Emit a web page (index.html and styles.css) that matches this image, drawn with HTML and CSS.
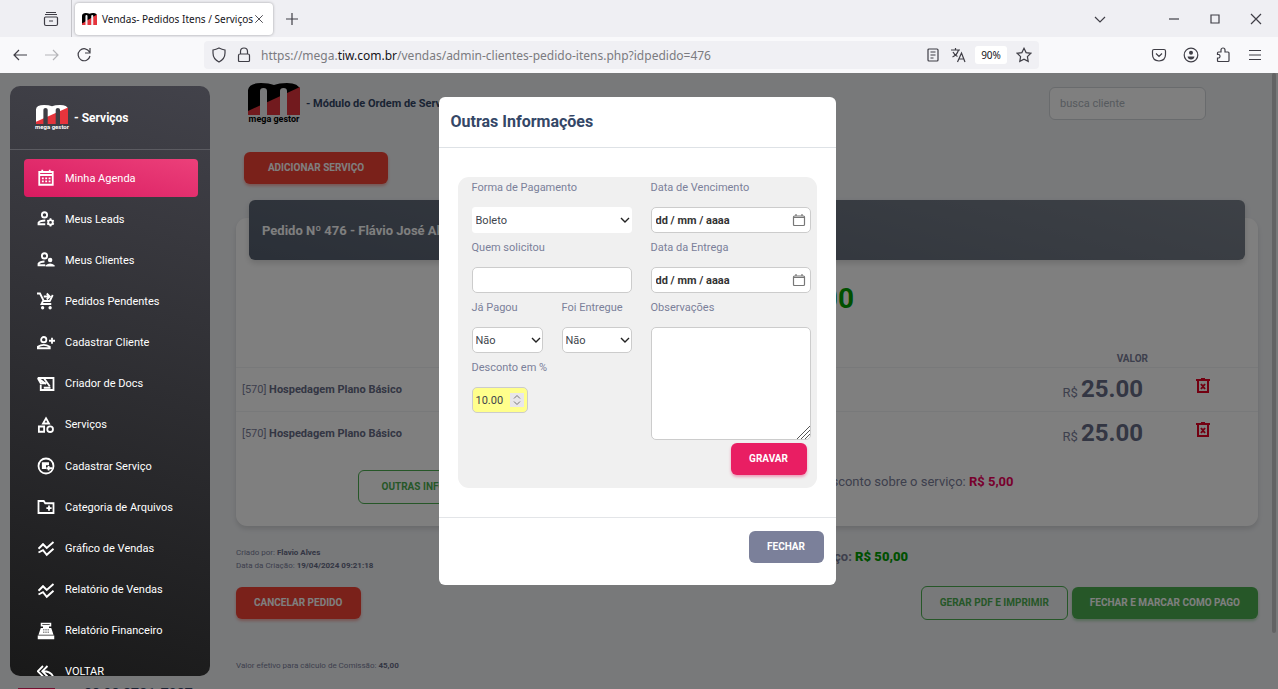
FILE: index.html
```html
<!DOCTYPE html>
<html lang="pt-BR">
<head>
<meta charset="utf-8">
<title>Vendas- Pedidos Itens / Serviços</title>
<link rel="stylesheet" href="styles.css">
</head>
<body>
<svg class="defs" aria-hidden="true">
  <symbol id="mark" viewBox="0 0 52 32">
    <path class="mark-base" d="M0 32V7Q1 0 13 0Q21 0 26 2Q31 0 39 0Q51 0 52 7V32Z"/>
    <path class="mark-red" d="M0 32V28L52 4V32Z"/>
    <path class="mark-gap" d="M12 32V8Q12 5 15.500 5Q19 5 19 8V32ZM32 32V8Q32 5 35.500 5Q39 5 39 8V32Z"/>
  </symbol>
  <symbol id="chev" viewBox="0 0 10 6"><path d="M1 1l4 4 4-4" fill="none" stroke="currentColor" stroke-width="1.4"/></symbol>
  <symbol id="cal" viewBox="0 0 14 14"><path d="M2.500 3h9q1 0 1 1v7.500q0 1-1 1h-9q-1 0-1-1V4q0-1 1-1zM1.500 4.500h11M4 1v2M10 1v2" fill="none" stroke="currentColor" stroke-width="1.200"/></symbol>
  <symbol id="trash" viewBox="0 0 14 16"><path d="M0 2h14M5 1h4M2 2v12h10V2M5 6l4 5M9 6l-4 5" fill="none" stroke="currentColor" stroke-width="2"/></symbol>
  <symbol id="chart" viewBox="0 0 24 24"><path d="M2 12l6-6 5 5 9-8M2 17l6-3 5 6 9-8" transform="translate(0 1)" fill="none" stroke="currentColor" stroke-width="2.600"/></symbol>
</svg>

<header class="browser">
  <div class="tabs">
    <button class="chrome-btn recent" aria-label="Abas recentes"><svg viewBox="0 0 16 16"><path d="M2 3.500h12M3 1.500h10M2.500 6h11q1 0 1 1v6q0 1.500-1.500 1.500H3q-1.500 0-1.500-1.500V7q0-1 1-1zM6 10h4"/></svg></button>
    <div class="tab">
      <svg class="favicon mark-light" viewBox="0 0 52 32" preserveAspectRatio="none"><use href="#mark"/></svg>
      <span class="tab-title">Vendas- Pedidos Itens / Serviços</span>
      <button class="chrome-btn tab-close" aria-label="Fechar aba"><svg viewBox="0 0 16 16"><path d="M3 3l10 10M13 3L3 13"/></svg></button>
    </div>
    <button class="chrome-btn newtab" aria-label="Nova aba"><svg viewBox="0 0 16 16"><path d="M8 2v12M2 8h12"/></svg></button>
    <div class="window-controls">
      <button class="chrome-btn list" aria-label="Listar abas"><svg viewBox="0 0 16 16"><path d="M3 6l5 5 5-5"/></svg></button>
      <button class="chrome-btn" aria-label="Minimizar"><svg viewBox="0 0 16 16"><path d="M3 8h10"/></svg></button>
      <button class="chrome-btn" aria-label="Maximizar"><svg viewBox="0 0 16 16"><path d="M4 4h8v8H4z"/></svg></button>
      <button class="chrome-btn" aria-label="Fechar"><svg viewBox="0 0 16 16"><path d="M3 3l10 10M13 3L3 13"/></svg></button>
    </div>
  </div>
  <div class="toolbar">
    <div class="nav-buttons">
      <button class="chrome-btn" aria-label="Voltar"><svg viewBox="0 0 16 16"><path d="M15 8H2M7 3L2 8l5 5"/></svg></button>
      <button class="chrome-btn" aria-label="Avançar" disabled><svg viewBox="0 0 16 16"><path d="M1 8h13M9 3l5 5-5 5"/></svg></button>
      <button class="chrome-btn" aria-label="Recarregar"><svg viewBox="0 0 16 16"><path d="M13.500 5A6 6 0 1 0 14 9M14 1v5H9"/></svg></button>
    </div>
    <div class="urlbar">
      <svg viewBox="0 0 16 16"><path d="M8 1q3 1.500 6 2v3q0 6-6 9q-6-3-6-9V3q3-.5 6-2z"/></svg>
      <svg viewBox="0 0 16 16"><path d="M4 7h8q1.500 0 1.500 1.500v5q0 1-1 1h-9q-1 0-1-1v-5Q2.500 7 4 7zM4.500 7V4.500a3.500 3.500 0 0 1 7 0V7"/></svg>
      <span class="url">https://mega.<b>tiw.com.br</b>/vendas/admin-clientes-pedido-itens.php?idpedido=476</span>
      <svg viewBox="0 0 16 16"><path d="M4 2h8q1 0 1 1v10q0 1-1 1H4q-1 0-1-1V3q0-1 1-1zM5.500 5h5M5.500 8h5M5.500 11h3"/></svg>
      <svg class="translate" viewBox="0 0 16 16"><path d="M1 3h9M5.500 1v2M2.500 10Q7 8 8.500 3M3 5q1.500 3 4.500 4.500M7.500 15L11.500 6l3.500 9M9 12h5"/></svg>
      <button class="zoom-level">90%</button>
      <svg viewBox="0 0 16 16"><path d="M8 1.300l2.100 4.300 4.700.7-3.400 3.300.8 4.700L8 12.100l-4.200 2.200.8-4.700L1.200 6.300l4.700-.7z"/></svg>
    </div>
    <div class="tool-buttons">
      <button class="chrome-btn" aria-label="Pocket"><svg viewBox="0 0 16 16"><path d="M3 2.500h10q1.500 0 1.500 1.500v3.500q0 6-6.500 6.500Q1.500 13.500 1.500 7.500V4Q1.500 2.500 3 2.500zM5 6.500l3 3 3-3"/></svg></button>
      <button class="chrome-btn" aria-label="Conta"><svg viewBox="0 0 16 16"><circle cx="8" cy="8" r="6.800"/><circle class="solid" cx="8" cy="5.800" r="2"/><path class="solid" d="M4.500 9.500h7q-.5 3-3.500 3t-3.500-3z"/></svg></button>
      <button class="chrome-btn" aria-label="Extensões"><svg viewBox="0 0 16 16"><path d="M6 5V3a2 2 0 0 1 4 0v2h3q1 0 1 1v7.500q0 1-1 1H3.500q-1 0-1-1V11H4a2 2 0 0 0 0-3.500H2.500V6q0-1 1-1z"/></svg></button>
      <button class="chrome-btn" aria-label="Menu"><svg viewBox="0 0 16 16"><path d="M2 3.500h12M2 8h12M2 12.500h12"/></svg></button>
    </div>
  </div>
</header>

<div class="viewport">
  <aside class="sidebar">
    <div class="brand">
      <span class="logo logo-small mark-dark"><svg viewBox="0 0 52 32" preserveAspectRatio="none"><use href="#mark"/></svg><span>mega gestor</span></span>
      <span>- Serviços</span>
    </div>
    <nav class="menu">
      <a class="active" href="#"><svg viewBox="0 0 24 24"><path d="M3 4h18v17H3zM3 8h18M7 1v4M17 1v4"/><path d="M6.500 12.500h2.500m2 0h2.500m2 0H18M6.500 16.500h2.500m2 0h2.500m2 0H18"/></svg>Minha Agenda</a>
      <a href="#"><svg viewBox="0 0 24 24"><circle cx="10" cy="6.500" r="3.500"/><path d="M11 19H2v-2q2-3 9-3"/><circle cx="18" cy="16.500" r="3"/><path d="M18 11v3M18 19v3M13.500 14l2.500 1M20 18l2.500 1M13.500 19l2.500-1M20 15l2.500-1"/></svg>Meus Leads</a>
      <a href="#"><svg viewBox="0 0 24 24"><circle cx="10" cy="6.500" r="3.500"/><path d="M11 19H2v-2q2-3 8-3"/><circle class="fill" cx="17.500" cy="12" r="3"/><path class="fill" d="M11.500 20.500V19q6-5 12 0v1.500z"/></svg>Meus Clientes</a>
      <a href="#"><svg viewBox="0 0 24 24"><path d="M0 2h4l5 10h8l4-8M8 12l-2 4h13M9 6h8M13 2l4 4-4 4"/><circle class="fill" cx="7.500" cy="21" r="2.200"/><circle class="fill" cx="17.500" cy="21" r="2.200"/></svg>Pedidos Pendentes</a>
      <a href="#"><svg viewBox="0 0 24 24"><circle cx="9" cy="7.500" r="3.500"/><path d="M1 19v-2q8-5 16 0v2zM20 5v8M16 9h8"/></svg>Cadastrar Cliente</a>
      <a href="#"><svg viewBox="0 0 24 24"><path d="M8 4h14v16H5v-7M1 4l11 8M1 4h8l8 11M1 4l4 7h7M9 17h9"/></svg>Criador de Docs</a>
      <a href="#"><svg viewBox="0 0 24 24"><path d="M12 3l4 7H8zM2.500 14h7v7h-7z"/><circle cx="17.500" cy="17.500" r="3.800"/></svg>Serviços</a>
      <a href="#"><svg viewBox="0 0 24 24"><circle cx="12" cy="12" r="10"/><path class="fill" d="M6.500 7H16v4h-4v5H6.500z"/><path d="M15.500 12v6M12.500 15h8"/></svg>Cadastrar Serviço</a>
      <a href="#"><svg viewBox="0 0 24 24"><path d="M2 4h7l2 3h11v13H2zM16 10v7M12.500 13.500h7"/></svg>Categoria de Arquivos</a>
      <a href="#"><svg viewBox="0 0 24 24"><use href="#chart"/></svg>Gráfico de Vendas</a>
      <a href="#"><svg viewBox="0 0 24 24"><use href="#chart"/></svg>Relatório de Vendas</a>
      <a href="#"><svg viewBox="0 0 24 24"><path class="fill" fill-rule="evenodd" d="M5 1h14v5h-3v2h3l3 9H2l3-9h3V6H5zM7 3v1h10V3zM8 10v1h2v-1zm3 0v1h2v-1zm3 0v1h2v-1zM8 13v1h2v-1zm3 0v1h2v-1zm3 0v1h2v-1z"/><path class="fill" d="M1 18h22v5H1z"/></svg>Relatório Financeiro</a>
      <a href="#"><svg viewBox="0 0 24 24"><path d="M8 4l-7 7 7 7M14 4l-7 7 7 7M8 11q12 0 14 9"/></svg>VOLTAR</a>
    </nav>
  </aside>

  <main class="page">
    <div class="page-head">
      <span class="logo mark-light"><svg viewBox="0 0 52 32"><use href="#mark"/></svg><span>mega gestor</span></span>
      <h1>- Módulo de Ordem de Serviço</h1>
      <input class="search" type="search" placeholder="busca cliente" aria-label="busca cliente">
    </div>
    <button class="btn btn-red add">Adicionar Serviço</button>

    <section class="order">
      <h2>Pedido Nº 476 - Flávio José Alves</h2>
      <p class="total">Total: R$ 45,00</p>
      <table>
        <thead><tr><th></th><th>Valor</th><th></th></tr></thead>
        <tbody>
          <tr><td>[570] <b>Hospedagem Plano Básico</b></td><td class="price">R$ <b>25.00</b></td><td class="del"><button aria-label="Excluir"><svg viewBox="0 0 14 16"><use href="#trash"/></svg></button></td></tr>
          <tr><td>[570] <b>Hospedagem Plano Básico</b></td><td class="price">R$ <b>25.00</b></td><td class="del"><button aria-label="Excluir"><svg viewBox="0 0 14 16"><use href="#trash"/></svg></button></td></tr>
        </tbody>
      </table>
      <div class="order-foot">
        <button class="btn btn-outline">Outras Informações</button>
        <p>Desconto sobre o serviço: <b>R$ 5,00</b></p>
      </div>
    </section>

    <div class="summary">
      <p class="meta">Criado por: <b>Flavio Alves</b><br>Data da Criação: <b>19/04/2024 09:21:18</b></p>
      <p class="service-total">Total do serviço: <b>R$ 50,00</b></p>
    </div>
    <div class="actions">
      <button class="btn btn-red">Cancelar Pedido</button>
      <button class="btn btn-outline print">Gerar PDF e Imprimir</button>
      <button class="btn btn-green">Fechar e Marcar como Pago</button>
    </div>
    <p class="commission">Valor efetivo para cálculo de Comissão: <b>45,00</b></p>
  </main>
  <div class="scrollbar"></div>
  <div class="contact"><span class="contact-icon"></span><b>88 98 8781-7087</b></div>

  <div class="backdrop">
    <div class="modal" role="dialog" aria-labelledby="modal-title">
      <h2 id="modal-title">Outras Informações</h2>
      <div class="modal-body">
        <form class="panel">
          <div class="field wide">
            <label for="forma">Forma de Pagamento</label>
            <div class="control"><select id="forma" class="plain"><option>Boleto</option></select><svg class="chev" viewBox="0 0 10 6"><use href="#chev"/></svg></div>
          </div>
          <div class="field">
            <label for="venc">Data de Vencimento</label>
            <div class="control"><input id="venc" class="date" type="text" placeholder="dd / mm / aaaa"><svg class="cal" viewBox="0 0 14 14"><use href="#cal"/></svg></div>
          </div>
          <div class="field wide">
            <label for="quem">Quem solicitou</label>
            <div class="control"><input id="quem" type="text"></div>
          </div>
          <div class="field">
            <label for="entrega">Data da Entrega</label>
            <div class="control"><input id="entrega" class="date" type="text" placeholder="dd / mm / aaaa"><svg class="cal" viewBox="0 0 14 14"><use href="#cal"/></svg></div>
          </div>
          <div class="field">
            <label for="pagou">Já Pagou</label>
            <div class="control"><select id="pagou"><option>Não</option></select><svg class="chev" viewBox="0 0 10 6"><use href="#chev"/></svg></div>
          </div>
          <div class="field">
            <label for="entregue">Foi Entregue</label>
            <div class="control"><select id="entregue"><option>Não</option></select><svg class="chev" viewBox="0 0 10 6"><use href="#chev"/></svg></div>
          </div>
          <div class="field notes">
            <label for="obs">Observações</label>
            <div class="area"><textarea id="obs"></textarea><svg class="grip" viewBox="0 0 13 13"><path d="M0 13L13 0M4 13l9-9M8 13l5-5"/></svg></div>
            <button class="btn btn-pink" type="button">Gravar</button>
          </div>
          <div class="field wide">
            <label for="desconto">Desconto em %</label>
            <div class="control discount"><input id="desconto" type="number" step="0.01" value="10.00"><svg class="spin" viewBox="0 0 14 14"><path d="M4 5.500l3-3 3 3M4 8.500l3 3 3-3"/></svg></div>
          </div>
        </form>
      </div>
      <div class="modal-foot"><button class="btn btn-gray">Fechar</button></div>
    </div>
  </div>
</div>
</body>
</html>
```
FILE: styles.css
```css
* { box-sizing: border-box; }
body {
  margin: 0;
  height: 100vh;
  display: flex;
  flex-direction: column;
  overflow: hidden;
  font-family: Roboto, "Liberation Sans", sans-serif;
  font-size: 11px;
  color: #7b809a;
  background: #f0f2f5;
}
h1, h2, p { margin: 0; }
button, input, select, textarea { font: inherit; }
button { cursor: pointer; }
.defs { position: absolute; width: 0; height: 0; }

/* Logo */
.mark-light { --base: #000; --gap: #f0f2f5; }
.mark-dark { --base: #fff; --gap: #3e3e45; }
.mark-base { fill: var(--base); }
.mark-red { fill: #e5343c; }
.mark-gap { fill: var(--gap); }
.logo { display: flex; flex-direction: column; align-items: center; width: 52px; font-size: 9px; font-weight: 700; line-height: 9px; white-space: nowrap; color: #000; }
.logo svg { width: 52px; height: 32px; }
.logo-small { width: 34px; font-size: 6px; line-height: 6px; color: #fff; }
.logo-small svg { width: 32px; height: 19px; }

/* Browser chrome */
.browser { flex: none; font-family: "Noto Sans", sans-serif; color: #15141a; }
.chrome-btn { display: flex; padding: 0; border: 0; background: none; color: #3f3e46; }
.chrome-btn:disabled { color: #b5b5b9; }
.browser svg { width: 16px; height: 16px; fill: none; stroke: currentColor; stroke-width: 1.2; flex: none; }
.browser svg .solid { fill: currentColor; stroke: none; }
.tabs { display: flex; align-items: center; height: 37px; background: #efeff3; }
.recent { width: 72px; height: 37px; padding-left: 43px; align-items: center; border-right: 1px solid #c5c5ca; }
.tab { display: flex; align-items: center; width: 198px; height: 32px; margin-left: 3px; padding: 0 8px 0 7px; border-radius: 4px; background: #fff; box-shadow: 0 0 3px #00000055; }
.browser .favicon { width: 15px; height: 12px; stroke: none; }
.tab-title { flex: 1; margin-left: 5px; font-size: 10px; white-space: nowrap; }
.browser .tab-close svg { width: 12px; height: 12px; }
.newtab { margin-left: 11px; }
.window-controls { display: flex; gap: 25px; margin-left: auto; padding-right: 14px; }
.list { margin-right: 33px; }
.toolbar { display: flex; align-items: center; height: 36px; background: #f9f9fb; }
.nav-buttons { display: flex; gap: 16px; width: 204px; padding-left: 12px; }
.urlbar { flex: 1; display: flex; align-items: center; height: 28px; padding: 0 7px; gap: 9px; border-radius: 4px; background: #f0f0f4; color: #3f3e46; }
.url { flex: 1; font-size: 12px; color: #7b7b80; white-space: nowrap; }
.url b { font-weight: 400; color: #15141a; }
.zoom-level { width: 32px; height: 18px; padding: 0; border: 0; border-radius: 3px; background: #fff; font-size: 10px; color: #15141a; }
.tool-buttons { display: flex; gap: 16px; padding: 0 15px 0 112px; }

/* Page */
.viewport { position: relative; flex: 1; min-height: 0; display: flex; overflow: hidden; }
.sidebar { position: relative; z-index: 3; flex: none; width: 200px; margin: 13px 0 13px 10px; border-radius: 10px; overflow: hidden; background: linear-gradient(195deg, #42424a, #191919); color: #fff; }
.brand { display: flex; align-items: center; gap: 5px; height: 64px; padding-left: 25px; border-bottom: 1px solid #5b5b61; font-size: 12px; font-weight: 700; }
.menu { display: flex; flex-direction: column; justify-content: space-between; height: 541px; padding: 9px 12px 0 14px; }
.menu a { flex: none; display: flex; align-items: center; gap: 10px; height: 38px; padding-left: 13px; border-radius: 4px; color: #fff; text-decoration: none; }
.menu svg { width: 18px; height: 18px; fill: none; stroke: currentColor; stroke-width: 2.4; }
.menu .fill { fill: currentColor; stroke: none; }
.menu .active { background: linear-gradient(195deg, #ec407a, #d81b60); }

.page { flex: 1; min-width: 0; padding: 9px 14px 0 26px; }
.page-head { display: flex; align-items: center; padding: 0 52px 0 12px; height: 43px; }
.page-head h1 { margin-left: 6px; font-size: 11px; color: #344767; }
.search { width: 157px; height: 33px; margin-left: auto; padding: 0 10px; border: 1px solid #d2d6da; border-radius: 6px; background: #fff; color: #7b809a; }
.search::placeholder { color: #adb5bd; }
.btn { height: 32px; padding: 0 18px; border: 0; border-radius: 6px; font-size: 10px; font-weight: 700; line-height: 16px; text-transform: uppercase; white-space: nowrap; color: #fff; }
.btn-red { background: #f44335; box-shadow: 0 2px 3px #f4433566; }
.btn-green { background: #4caf50; box-shadow: 0 2px 3px #4caf5066; }
.btn-outline { height: 34px; border: 1px solid #4caf50; background: none; color: #4caf50; }
.btn-pink { background: #e91e63; box-shadow: 0 2px 3px #e91e6366; }
.btn-gray { background: #7b809a; }
.add { display: block; width: 144px; margin: 27px 0 0 8px; }

.order { display: flow-root; height: 308px; margin-top: 34px; border-radius: 11px; background: #fff; box-shadow: 0 3px 5px #0000001f; }
.order h2 { display: flex; align-items: center; height: 60px; margin: -18px 13px 0; padding-left: 13px; border-radius: 6px; background: linear-gradient(195deg, #7b828d, #566070); box-shadow: 0 3px 6px #00000026; font-size: 13px; color: #fff; }
.total { display: flex; justify-content: flex-end; width: 618px; margin-top: 20px; font-size: 28px; line-height: 38px; font-weight: 700; color: #00a000; }
table { width: 100%; margin-top: 29px; border-collapse: collapse; }
th { height: 20px; padding: 4px 0 0; font-size: 10px; text-align: right; text-transform: uppercase; vertical-align: middle; }
td { height: 44px; padding: 0; border-top: 1px solid #f0f2f5; }
td:first-child { padding-left: 6px; }
td b { color: #676c87; }
th:nth-child(2) { width: 200px; padding-right: 3px; }
.price { width: 200px; padding-right: 8px; font-size: 13px; text-align: right; }
.price b { font-size: 24px; }
.del { width: 107px; padding: 0 0 6px 45px; }
.del button { display: block; padding: 0; border: 0; background: none; color: #e60023; }
.del svg { display: block; width: 14px; height: 16px; }
.order-foot { display: flex; align-items: center; margin-top: 15px; padding-left: 122px; font-size: 13px; }
.order-foot p { width: 442px; margin: 0 0 12px auto; }
.order-foot .btn { width: 158px; }
.order-foot p b { color: #f0005a; }

.summary { display: flex; justify-content: space-between; align-items: center; margin-top: 20px; }
.meta { font-size: 8px; line-height: 13px; }
.meta b, .commission b { color: #676c87; }
.service-total { margin: 0 350px 5px 0; font-size: 13px; font-weight: 700; }
.service-total b { color: #00a000; }
.actions { display: flex; gap: 4px; align-items: center; margin-top: 14px; }
.print { margin-left: auto; }
.commission { margin-top: 41px; font-size: 8px; line-height: 10px; }
.scrollbar { flex: none; width: 4px; height: 560px; margin-right: 2px; border-radius: 2px; background: #c6c6c8; }

/* Contact strip that peeks in from below the fold */
.contact { position: absolute; left: 18px; bottom: -14px; display: flex; align-items: flex-start; gap: 29px; height: 17px; font-size: 14px; line-height: 17px; color: #344767; }
.contact-icon { width: 37px; height: 15px; margin-top: 2px; background: #e91e63; }

/* Modal */
.backdrop { position: absolute; z-index: 2; inset: 0; display: flex; justify-content: center; align-items: flex-start; padding: 24px 4px 0 0; background: rgba(0, 0, 0, .5); }
.modal { width: 397px; border-radius: 6px; background: #fff; }
.modal h2 { height: 51px; padding: 13px 12px; border-bottom: 1px solid #dee2e6; font-size: 16px; line-height: 24px; color: #344767; }
.modal-body { padding: 29px 19px 29px; border-bottom: 1px solid #e3e5e8; }
.panel { display: grid; grid-template-columns: 71px 70px 160px; grid-template-rows: 60px 60px 60px auto; column-gap: 19px; padding: 0 6px 13px 14px; border-radius: 11px; background: #f0f0f0; }
.wide { grid-column: span 2; }
.field label { display: block; height: 30px; padding-top: 1px; line-height: 20px; white-space: nowrap; }
.control { position: relative; height: 30px; }
.control input, .control select { width: 100%; height: 26px; padding: 0 4px; appearance: none; border: 1px solid #ccc; border-radius: 5px; background: #fff; color: #40444c; }
.control select, .control input[type=number] { padding: 0 3px; }
.control .plain { border-color: #fff; border-radius: 3px; }
.control .date::placeholder { color: #333; font-weight: 700; opacity: 1; }
.chev { position: absolute; right: 2px; top: 10px; width: 10px; height: 6px; color: #222; pointer-events: none; }
.cal { position: absolute; right: 5px; top: 6px; width: 14px; height: 14px; color: #777; pointer-events: none; }
.notes { grid-row: span 2; display: flex; flex-direction: column; }
.area { position: relative; }
.notes textarea { display: block; width: 100%; height: 113px; border: 1px solid #ccc; border-radius: 5px; background: #fff; resize: none; }
.grip { position: absolute; right: 1px; bottom: 1px; width: 13px; height: 13px; fill: none; stroke: #555; pointer-events: none; }
.notes .btn { align-self: flex-end; width: 76px; margin: 3px 4px 0 0; }
.panel .discount { width: 56px; }
.discount input { background: #ffff8c; }
.discount input::-webkit-inner-spin-button { appearance: none; margin: 0; }
.spin { position: absolute; right: 4px; top: 6px; width: 14px; height: 14px; fill: none; stroke: #777; background: #e8e6ea; pointer-events: none; }
.modal-foot { display: flex; justify-content: flex-end; padding: 13px 12px 22px; }
.modal-foot .btn { width: 75px; }
```
